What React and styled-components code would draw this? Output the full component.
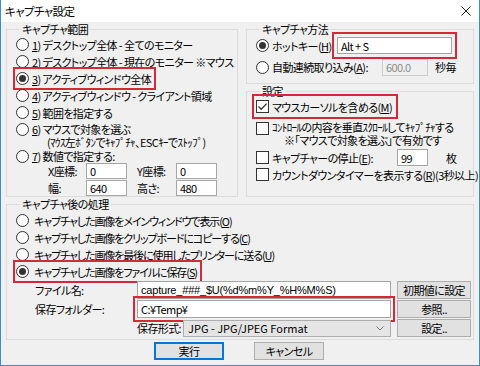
import React from 'react';
import styled, { createGlobalStyle } from 'styled-components';

const Global = createGlobalStyle`
  html, body { margin: 0; padding: 0; background: #f0f0f0; }
  body {
    font-family: "Noto Sans CJK JP", "Noto Sans", sans-serif;
    font-size: 11px;
    color: #000;
  }
  * { box-sizing: border-box; }
`;

const RED = '#d42a37';

const Window = styled.div`
  width: 480px;
  height: 366px;
  display: flex;
  flex-direction: column;
  border: 1px solid #3c8bd6;
  border-top: none;
  background: #f0f0f0;
  overflow: hidden;
  font-size: 11px;
  letter-spacing: -0.6px;
  font-feature-settings: "palt";
  line-height: 14px;
`;

const TitleBar = styled.div`
  height: 22px;
  flex: none;
  background: #fff;
  display: flex;
  align-items: center;
  justify-content: space-between;
  padding: 0 8px 0 4px;
`;

const Title = styled.span`
  font-size: 11.5px;
`;

const Body = styled.div`
  flex: 1;
  display: flex;
  flex-direction: column;
  padding: 0 5px;
`;

const TopGrid = styled.div`
  display: grid;
  grid-template-columns: 232px 228px;
  column-gap: 8px;
`;

const RightCol = styled.div`
  display: flex;
  flex-direction: column;
`;

const Group = styled.fieldset`
  margin: 0;
  min-width: 0;
  border: 1px solid #dcdcdc;
  padding: ${p => p.$pt ?? 0}px 6px 0 9px;
  height: ${p => p.$h}px;
  display: flex;
  flex-direction: column;
`;

const Legend = styled.legend`
  padding: 0 2px;
  margin-left: 4px;
  line-height: 14px;
`;

const Option = styled.div`
  display: flex;
  align-items: ${p => (p.$top ? 'flex-start' : 'center')};
  gap: ${p => p.$gap ?? 3}px;
  height: ${p => p.$h ?? 17}px;
  margin-top: ${p => p.$mt ?? 0}px;
  width: fit-content;
  white-space: nowrap;
  outline: ${p => (p.$hl ? `2px solid ${RED}` : 'none')};
  outline-offset: ${p => p.$oo ?? 1}px;
  padding-right: ${p => (p.$hl ? 2 : 0)}px;
`;

const RadioDot = styled.span`
  flex: none;
  width: 13px;
  height: 13px;
  border-radius: 50%;
  border: 1px solid #333;
  background: #fff;
  display: flex;
  align-items: center;
  justify-content: center;
  margin-top: ${p => p.$mt ?? 0}px;
  &::after {
    content: "";
    width: 7px;
    height: 7px;
    border-radius: 50%;
    background: #333;
    opacity: ${p => (p.$on ? 1 : 0)};
  }
`;

const Box = styled.span`
  flex: none;
  width: 13px;
  height: 13px;
  border: 1px solid #333;
  background: #fff;
  display: flex;
  align-items: center;
  justify-content: center;
  margin-top: ${p => p.$mt ?? 0}px;
`;

const Radio = ({ on, mt }) => <RadioDot $on={on} $mt={mt} />;
const Check = ({ on, mt }) => (
  <Box $mt={mt}>
    {on && (
      <svg width="11" height="11" viewBox="0 0 11 11">
        <path d="M1.5 5.5 L4.2 8.2 L9.6 2.6" fill="none" stroke="#333" strokeWidth="1.3" />
      </svg>
    )}
  </Box>
);

const TwoLines = styled.span`
  display: flex;
  flex-direction: column;
  line-height: 13px;
  padding-top: ${p => p.$pt ?? 0}px;
`;

const SubLine = styled.span`
  padding-left: ${p => p.$indent}px;
`;

const Field = styled.div`
  flex: none;
  width: ${p => p.$w}px;
  height: ${p => p.$hgt ?? 17}px;
  border: 1px solid ${p => (p.$off ? '#cccccc' : '#a6a6a6')};
  background: ${p => (p.$off ? '#f0f0f0' : '#fff')};
  color: ${p => (p.$off ? '#8a8a8a' : '#000')};
  display: flex;
  align-items: center;
  padding: 0 3px;
  margin-left: ${p => p.$ml ?? 0}px;
  white-space: nowrap;
  outline: ${p => (p.$hl ? `2px solid ${RED}` : 'none')};
  outline-offset: ${p => p.$oo ?? 2}px;
`;

const Mono = styled.span`
  font-family: "Liberation Sans", "Noto Sans", sans-serif;
  letter-spacing: -0.2px;
`;

const Text = styled.span`
  flex: none;
  margin-left: ${p => p.$ml ?? 0}px;
  width: ${p => (p.$w ? `${p.$w}px` : 'auto')};
  letter-spacing: ${p => (p.$tight ? '-1.1px' : 'inherit')};
  white-space: nowrap;
`;

const CoordGrid = styled.div`
  display: grid;
  grid-template-columns: 38px 41px 49px 41px;
  grid-auto-rows: 16px;
  row-gap: 1px;
  align-items: center;
  padding-left: 32px;
`;

const CoordLabel = styled.span`
  padding-left: ${p => p.$pl ?? 0}px;
`;

const FileGrid = styled.div`
  display: grid;
  grid-template-columns: 96px 254px 74px;
  column-gap: 6px;
  grid-auto-rows: 18px;
  row-gap: 1px;
  align-items: center;
  padding-left: 19px;
  margin-top: 1px;
`;

const FormatCell = styled.div`
  display: flex;
  align-items: center;
  gap: 2px;
`;

const Select = styled.div`
  flex: 1;
  height: 17px;
  border: 1px solid #adadad;
  background: #e5e5e5;
  display: flex;
  align-items: center;
  justify-content: space-between;
  padding: 0 6px 0 4px;
  letter-spacing: 0;
`;

const Button = styled.button`
  width: ${p => p.$w ?? 74}px;
  height: 18px;
  padding: 0;
  font: inherit;
  letter-spacing: inherit;
  line-height: 14px;
  color: #000;
  background: #e1e1e1;
  border: 1px solid ${p => (p.$def ? '#0078d7' : '#adadad')};
  box-shadow: ${p => (p.$def ? 'inset 0 0 0 1px #0078d7' : 'none')};
`;

const ButtonRow = styled.div`
  display: flex;
  justify-content: center;
  gap: 30px;
  margin-top: 2px;
  padding-right: 2px;
`;

const Chevron = () => (
  <svg width="8" height="5" viewBox="0 0 8 5">
    <path d="M0.5 0.5 L4 4 L7.5 0.5" fill="none" stroke="#777" strokeWidth="1" />
  </svg>
);

const CloseIcon = () => (
  <svg width="10" height="10" viewBox="0 0 10 10">
    <path d="M0.5 0.5 L9.5 9.5 M9.5 0.5 L0.5 9.5" stroke="#222" strokeWidth="1" />
  </svg>
);

export default function App() {
  return (
    <>
      <Global />
      <Window>
        <TitleBar>
          <Title>キャプチャ設定</Title>
          <CloseIcon />
        </TitleBar>
        <Body>
          <TopGrid>
            <Group $h={175}>
              <Legend>キャプチャ範囲</Legend>
              <Option>
                <Radio />
                <Text><u>1</u>) デスクトップ全体 - 全てのモニター</Text>
              </Option>
              <Option>
                <Radio />
                <Text><u>2</u>) デスクトップ全体 - 現在のモニター ※マウス</Text>
              </Option>
              <Option $hl>
                <Radio on />
                <Text><u>3</u>) アクティブウィンドウ全体</Text>
              </Option>
              <Option>
                <Radio />
                <Text><u>4</u>) アクティブウィンドウ - クライアント領域</Text>
              </Option>
              <Option>
                <Radio />
                <Text><u>5</u>) 範囲を指定する</Text>
              </Option>
              <Option $top $h={28}>
                <Radio mt={2} />
                <TwoLines $pt={2}>
                  <span><u>6</u>) マウスで対象を選ぶ</span>
                  <SubLine $indent={15}>(ﾏｳｽ左ﾎﾞﾀﾝでｷｬﾌﾟﾁｬ、ESCｷｰでｽﾄｯﾌﾟ)</SubLine>
                </TwoLines>
              </Option>
              <Option $h={14}>
                <Radio />
                <Text><u>7</u>) 数値で指定する:</Text>
              </Option>
              <CoordGrid>
                <CoordLabel>X座標:</CoordLabel>
                <Field $w={41} $hgt={16}>0</Field>
                <CoordLabel $pl={10}>Y座標:</CoordLabel>
                <Field $w={41} $hgt={16}>0</Field>
                <CoordLabel>幅:</CoordLabel>
                <Field $w={41} $hgt={16}>640</Field>
                <CoordLabel $pl={10}>高さ:</CoordLabel>
                <Field $w={41} $hgt={16}>480</Field>
              </CoordGrid>
            </Group>
            <RightCol>
              <Group $h={62}>
                <Legend>キャプチャ方法</Legend>
                <Option $h={19}>
                  <Radio on />
                  <Text $w={62}>ホットキー(<u>H</u>):</Text>
                  <Field $w={115} $hl $oo={3}>Alt + S</Field>
                </Option>
                <Option $h={18} $mt={3}>
                  <Radio />
                  <Text $w={107}>自動連続取り込み(<u>A</u>):</Text>
                  <Field $w={46} $off>600.0</Field>
                  <Text $ml={4}>秒毎</Text>
                </Option>
              </Group>
              <Group $h={113}>
                <Legend>設定</Legend>
                <Option $hl $oo={2}>
                  <Check on />
                  <Text>マウスカーソルを含める(<u>M</u>)</Text>
                </Option>
                <Option $top $h={27} $mt={6}>
                  <Check mt={1} />
                  <TwoLines>
                    <span>ｺﾝﾄﾛｰﾙの内容を垂直ｽｸﾛｰﾙしてｷｬﾌﾟﾁｬする</span>
                    <SubLine $indent={12}>※「マウスで対象を選ぶ」で有効です</SubLine>
                  </TwoLines>
                </Option>
                <Option $mt={1}>
                  <Check />
                  <Text $w={122}>キャプチャーの停止(<u>E</u>):</Text>
                  <Field $w={31}>99</Field>
                  <Text $ml={15}>枚</Text>
                </Option>
                <Option>
                  <Check />
                  <Text>カウントダウンタイマーを表示する(<u>R</u>)(3秒以上)</Text>
                </Option>
              </Group>
            </RightCol>
          </TopGrid>
          <Group $h={143} $pt={1}>
            <Legend>キャプチャ後の処理</Legend>
            <Option $gap={5}>
              <Radio />
              <Text $tight>キャプチャした画像をメインウィンドウで表示(<u>O</u>)</Text>
            </Option>
            <Option $gap={5}>
              <Radio />
              <Text $tight>キャプチャした画像をクリップボードにコピーする(<u>C</u>)</Text>
            </Option>
            <Option $gap={5}>
              <Radio />
              <Text $tight>キャプチャした画像を最後に使用したプリンターに送る(<u>U</u>)</Text>
            </Option>
            <Option $gap={5} $hl>
              <Radio on />
              <Text $tight>キャプチャした画像をファイルに保存(<u>S</u>)</Text>
            </Option>
            <FileGrid>
              <Text>ファイル名:</Text>
              <Field $w={254} $hgt={18}><Mono>capture_###_$U(%d%m%Y_%H%M%S)</Mono></Field>
              <Button>初期値に設定</Button>
              <Text>保存フォルダー:</Text>
              <Field $w={254} $hgt={18} $hl>C:¥Temp¥</Field>
              <Button>参照..</Button>
              <span />
              <FormatCell>
                <Text>保存形式:</Text>
                <Select>
                  <span>JPG - JPG/JPEG Format</span>
                  <Chevron />
                </Select>
              </FormatCell>
              <Button>設定..</Button>
            </FileGrid>
          </Group>
          <ButtonRow>
            <Button $w={70} $def>実行</Button>
            <Button $w={70}>キャンセル</Button>
          </ButtonRow>
        </Body>
      </Window>
    </>
  );
}
